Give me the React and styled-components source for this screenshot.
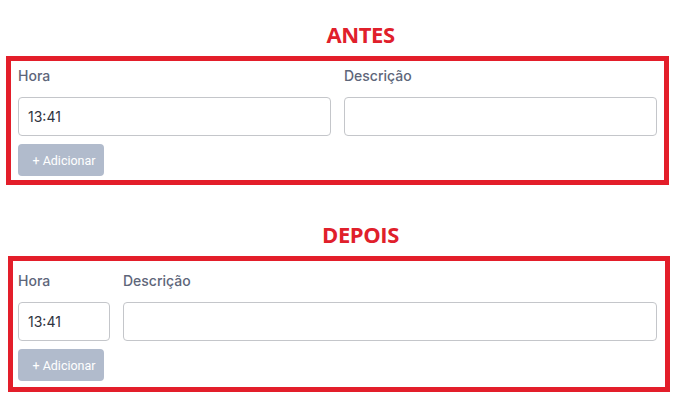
import styled, { createGlobalStyle } from 'styled-components'

const GlobalStyle = createGlobalStyle`
    body {
        margin: 0;
        background: #ffffff;
        font-family: Inter, "Noto Sans", sans-serif;
    }
`;

const Compare = ({ title, columns, padding, margin }) => {
    return (
        <Section>
            <Title>{title}</Title>
            <Frame $padding={padding} $margin={margin}>
                <Fields $columns={columns}>
                    <Field>
                        <Label>Hora</Label>
                        <Input defaultValue="13:41" />
                    </Field>
                    <Field>
                        <Label>Descrição</Label>
                        <Input />
                    </Field>
                </Fields>
                <AddButton>+ Adicionar</AddButton>
            </Frame>
        </Section>
    );
};

const App = () => {
    return (
        <Page>
            <GlobalStyle />
            <Compare title="ANTES" columns="1fr 1fr" padding="5px 7px 4px 7px" margin="0 8px 0 6px" />
            <Compare title="DEPOIS" columns="92px 1fr" padding="10px 8px 6px 5px" margin="0 7px 0 8px" />
        </Page>
    );
};

const Page = styled.main`
    display: flex;
    flex-direction: column;
    gap: 34px;
    padding-top: 19px;
`;

const Section = styled.section`
    display: flex;
    flex-direction: column;
    gap: 7px;
`;

const Title = styled.h2`
    margin: 0;
    padding-left: 44px;
    text-align: center;
    font-family: "Open Sans", sans-serif;
    font-weight: 700;
    font-size: 22px;
    line-height: 30px;
    color: #e0202b;
    letter-spacing: -0.4px;
`;

const Frame = styled.div`
    margin: ${p => p.$margin};
    border: 5px solid #e31e2a;
    padding: ${p => p.$padding};
    display: flex;
    flex-direction: column;
    align-items: flex-start;
    gap: 8px;
`;

const Fields = styled.div`
    display: grid;
    grid-template-columns: ${p => p.$columns};
    gap: 13px;
    width: 100%;
`;

const Field = styled.div`
    display: flex;
    flex-direction: column;
    gap: 11px;
    min-width: 0;
`;

const Label = styled.label`
    font-size: 14px;
    font-weight: 500;
    line-height: 20px;
    color: #5e667a;
`;

const Input = styled.input`
    box-sizing: border-box;
    height: 39px;
    width: 100%;
    border: 1px solid #c4c6ca;
    border-radius: 4px;
    padding: 0 9px;
    font-family: Inter, "Noto Sans", sans-serif;
    font-size: 14px;
    color: #2f3340;
    background: #ffffff;
    outline: none;
`;

const AddButton = styled.button`
    width: 86px;
    height: 32px;
    padding: 0 0 0 6px;
    border: none;
    border-radius: 4px;
    background: #b1bbcc;
    color: #ffffff;
    font-family: Roboto, "Liberation Sans", sans-serif;
    font-size: 12.5px;
    cursor: not-allowed;
`;

export default App;
